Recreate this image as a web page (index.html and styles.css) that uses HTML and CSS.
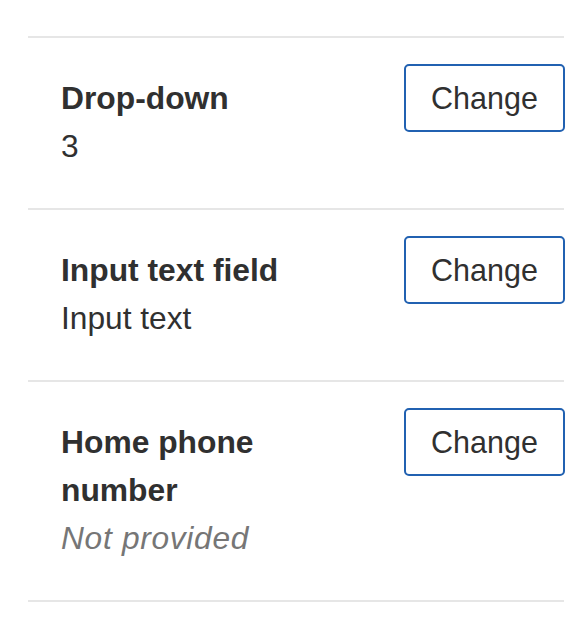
FILE: index.html
```html
<!DOCTYPE html>
<html lang="en">
<head>
<meta charset="utf-8">
<title>Summary list</title>
<link rel="stylesheet" href="styles.css">
</head>
<body>
<dl class="summary">
  <div class="row">
    <div class="text">
      <dt class="key">Drop-down</dt>
      <dd class="value">3</dd>
    </div>
    <button class="change" type="button">Change</button>
  </div>
  <div class="row">
    <div class="text">
      <dt class="key">Input text field</dt>
      <dd class="value">Input text</dd>
    </div>
    <button class="change" type="button">Change</button>
  </div>
  <div class="row">
    <div class="text">
      <dt class="key">Home phone number</dt>
      <dd class="value empty">Not provided</dd>
    </div>
    <button class="change" type="button">Change</button>
  </div>
</dl>
</body>
</html>
```
FILE: styles.css
```css
html, body {
  margin: 0;
  padding: 0;
  background: #ffffff;
}

body {
  font-family: "Liberation Sans", Arial, sans-serif;
  color: #303030;
}

.summary {
  margin: 36px 20px 0 28px;
  padding: 0;
  border-bottom: 2px solid #e6e6e6;
}

.row {
  display: flex;
  justify-content: space-between;
  align-items: flex-start;
  border-top: 2px solid #e6e6e6;
  padding: 26px 0 38px 33px;
}

.text {
  padding-top: 10px;
  max-width: 270px;
}

.key {
  margin: 0;
  font-size: 31.8px;
  line-height: 48px;
  font-weight: bold;
}

.value {
  margin: 0;
  font-size: 31.7px;
  line-height: 48px;
}

.value.empty {
  font-style: italic;
  color: #767676;
  letter-spacing: 0.7px;
}

.change {
  box-sizing: border-box;
  width: 161px;
  height: 68px;
  margin-right: -1px;
  padding: 0;
  border: 2px solid #2161b1;
  border-radius: 5px;
  background: #ffffff;
  color: #303030;
  font-family: "Liberation Sans", Arial, sans-serif;
  font-size: 30.5px;
  line-height: 64px;
  text-align: center;
}
```
